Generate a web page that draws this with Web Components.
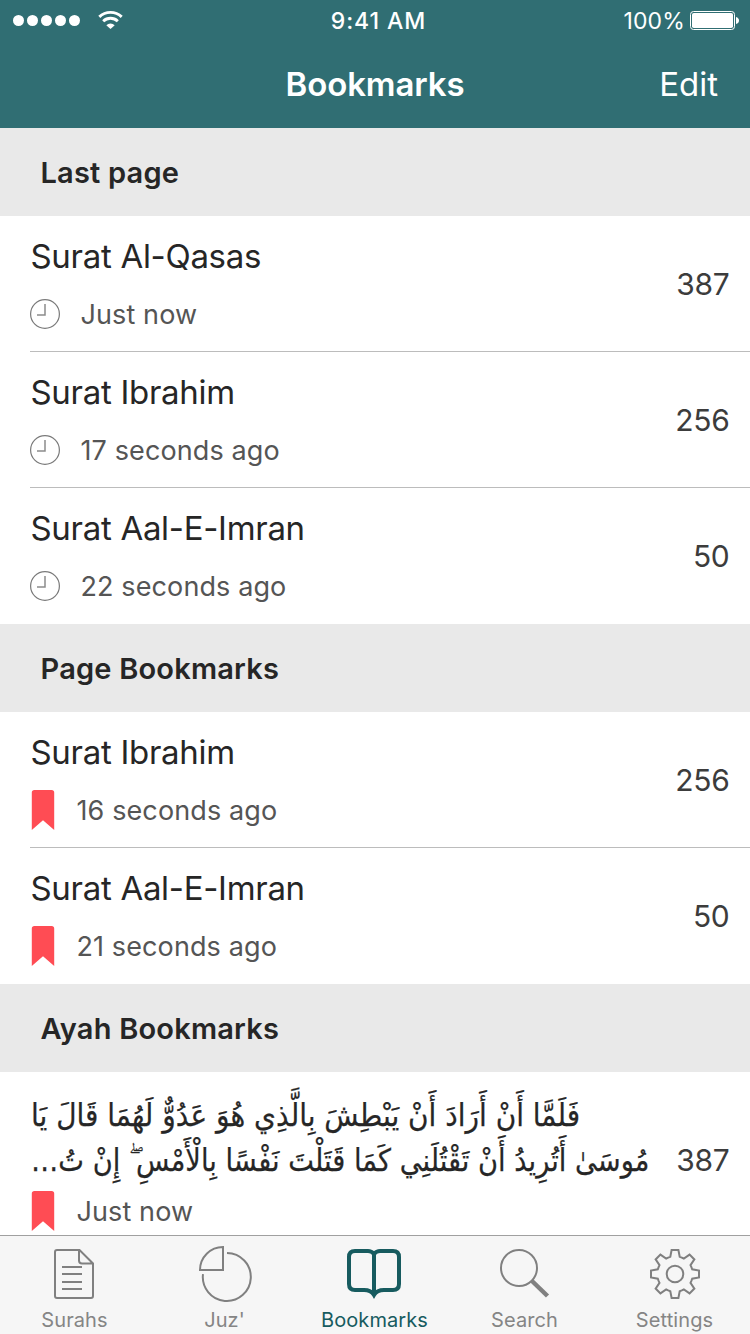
<!DOCTYPE html>
<html lang="en">
<head>
<meta charset="utf-8">
<title>Bookmarks</title>
<style>
html,body{margin:0;height:100%;background:#fff}
body{font-family:Inter,"Liberation Sans",sans-serif;color:#262626}
</style>
</head>
<body>
<quran-app></quran-app>
<script>
const define = (name, html, setup) => customElements.define(name, class extends HTMLElement {
  constructor() {
    super();
    const t = document.createElement('template');
    t.innerHTML = html;
    this.attachShadow({mode: 'open'}).append(t.content.cloneNode(true));
  }
  connectedCallback() { if (setup) setup(this, this.shadowRoot); }
});

define('status-bar', `<style>
:host{display:grid;grid-template-columns:1fr auto 1fr;grid-template-rows:40px;align-items:start;height:40px;padding:0 11px 0 13px;color:#fff;font-size:23px;line-height:42px;box-sizing:border-box}
.left,.right{display:flex;align-items:flex-start;height:40px}
.right{justify-content:flex-end;gap:5px}
.left svg,.right svg{display:block}
.right svg{margin-top:10px}
.time{font-weight:500;letter-spacing:.95px;padding-left:5px}
.pct{letter-spacing:.15px}
</style>
<div class="left"><svg width="112" height="40" viewBox="0 0 112 40" fill="#fff">
<circle cx="5.5" cy="20.5" r="5.5"/><circle cx="19.5" cy="20.5" r="5.5"/><circle cx="33.5" cy="20.5" r="5.5"/><circle cx="47.5" cy="20.5" r="5.5"/><circle cx="61.5" cy="20.5" r="5.5"/>
<g fill="none" stroke="#fff" stroke-width="2.9"><path d="M86.3 16.900a16.2 16.2 0 0 1 22.4 0"/><path d="M90.2 21.2a10.6 10.6 0 0 1 14.6 0"/></g>
<path d="M93.3 25.3a6 6 0 0 1 8.4 0L97.5 29z"/></svg></div>
<div class="time">9:41 AM</div>
<div class="right"><span class="pct">100%</span><svg width="49" height="20" viewBox="0 0 49 20"><rect x=".5" y="1.5" width="44" height="18" rx="3" fill="none" stroke="#fff"/><rect x="2" y="3" width="41" height="15" rx="1.8" fill="#fff"/><path d="M46 7q3 1 3 3.500t-3 3.500z" fill="#fff"/></svg></div>`);

define('nav-bar', `<style>
:host{display:grid;grid-template-columns:1fr auto 1fr;align-items:center;height:88px;padding:0 32px;color:#fff;font-size:33px;line-height:88px}
.title{font-weight:600;letter-spacing:-.12px}
.action{justify-self:end}
</style><span></span><div class="title"><slot></slot></div><div class="action"><slot name="action"></slot></div>`);

define('section-header', `<style>
:host{display:block;height:88px;box-sizing:border-box;padding:1px 0 0 40.500px;background:#e9e9e9;font-size:29px;font-weight:600;letter-spacing:.2px;line-height:88px}
</style><slot></slot>`);

define('clock-icon', `<style>:host{display:block;width:50.500px;height:30px}svg{display:block}</style>
<svg width="30" height="30" viewBox="0 0 30 30" fill="none" stroke="#7a7a7a"><circle cx="15" cy="15" r="14.4" stroke-width="1.2"/><path d="M15 5v11H7" stroke-width="1.500" stroke="#8c8c8c"/></svg>`);

define('ribbon-icon', `<style>:host{display:block;width:46.500px;height:40px}svg{display:block}</style>
<svg width="30" height="40" viewBox="0 0 30 40"><path d="M1.8 40V2.6Q1.8 0 4.4 0H21.6Q24.2 0 24.2 2.6V40L13 30.3z" fill="#ff4c54"/></svg>`);

define('bookmark-row', `<style>
:host{display:flex;align-items:center;height:136px;box-sizing:border-box;margin-left:30px;padding-right:20.500px;border-bottom:1px solid #bcbcbc}
:host([last]){border-bottom-color:transparent}
:host([ayah]){height:176px}
.main{flex:1;align-self:stretch;padding-top:20px;box-sizing:border-box;min-width:0}
.title{font-size:33px;line-height:40px;white-space:nowrap;letter-spacing:-.3px;padding-left:.5px}
.sub{display:flex;align-items:center;height:32px;margin-top:22px;font-size:27px;line-height:32px;letter-spacing:.11px;color:#555}
.txt{padding-top:2px}
.page{font-size:30px;line-height:40px;letter-spacing:-.3px;color:#3c3c3c}
:host([ayah]) .title{height:90px;letter-spacing:0}
:host([ayah]) .sub{margin-top:13px}
</style><div class="main"><div class="title"><slot name="title"></slot></div><div class="sub"><slot name="icon"></slot><div class="txt"><slot></slot></div></div></div><div class="page"></div>`,
(el, root) => root.querySelector('.page').textContent = el.getAttribute('page'));

// One line of verse, condensed horizontally towards its left end.
define('ayah-line', `<style>
:host{display:block;height:45px;width:620px}
div{direction:rtl;width:max-content;font:31px/47px "DejaVu Sans",sans-serif;transform-origin:0 0;transform:scaleX(var(--condense));-webkit-text-stroke:.25px currentColor}
</style><div><slot></slot></div>`);

define('tab-item', `<style>
:host{display:flex;flex-direction:column;align-items:center;width:150px;color:#858585;font-size:20px;line-height:24px}
:host([active]){color:#175b5f}
.icon{height:60px;margin-top:8px}
.label{margin-top:4px;padding-right:1px;letter-spacing:.1px}
::slotted(svg){display:block}
</style><div class="icon"><slot name="icon"></slot></div><div class="label"><slot></slot></div>`);

define('tab-bar', `<style>
:host{display:flex;justify-content:space-between;flex:none;height:99px;box-sizing:border-box;border-top:1px solid #a0a0a0;background:#f6f6f6}
svg{fill:none;stroke:#808080;stroke-width:2}
</style>
<tab-item><svg slot="icon" width="60" height="60" viewBox="45 1244 60 60"><path d="M57 1250H79.500L93 1263.500V1296Q93 1298 91 1298H57Q55 1298 55 1296V1252Q55 1250 57 1250ZM79 1250V1260.500Q79 1263.500 82 1263.500H93M62 1267H82M62 1274H82M62 1282H82M62 1289H82"/></svg>Surahs</tab-item>
<tab-item><svg slot="icon" width="60" height="60" viewBox="195 1244 60 60"><path d="M223 1247V1270H200A23 23 0 0 1 223 1247ZM227 1253A24 24 0 1 1 203 1274"/></svg>Juz'</tab-item>
<tab-item active><svg slot="icon" width="60" height="60" viewBox="345 1244 60 60" style="stroke:#175b5f;stroke-width:4"><path d="M374 1254Q371.500 1251 368 1251H355Q349 1251 349 1257V1284Q349 1290 355 1290H364Q371 1290 374 1295Q377 1290 384 1290H393Q399 1290 399 1284V1257Q399 1251 393 1251H380Q376.500 1251 374 1254V1294"/></svg>Bookmarks</tab-item>
<tab-item><svg slot="icon" width="60" height="60" viewBox="495 1244 60 60"><circle cx="519" cy="1268" r="18"/><path d="M532 1281L547.500 1296" stroke-width="4.500"/></svg>Search</tab-item>
<tab-item><svg slot="icon" width="60" height="60" viewBox="645 1244 60 60"><circle cx="675" cy="1274" r="8.300"/><path id="gear"/></svg>Settings</tab-item>`,
(el, root) => {
  // Eight teeth, one every 45 degrees around the hub.
  const tooth = [[-6.8, -16.4], [-4.7, -17.2], [-3.4, -24], [3.4, -24], [4.7, -17.2], [6.8, -16.4]];
  const points = [];
  for (let i = 0; i < 8; i++) {
    const a = i * Math.PI / 4, c = Math.cos(a), s = Math.sin(a);
    for (const [x, y] of tooth) points.push((675 + x * c - y * s).toFixed(2) + ' ' + (1274 + x * s + y * c).toFixed(2));
  }
  root.querySelector('#gear').setAttribute('d', 'M' + points.join('L') + 'Z');
});

define('quran-app', `<style>
:host{display:flex;flex-direction:column;width:750px;height:1334px;overflow:hidden;background:#fff}
header{flex:none;background:#306e73}
main{flex:1;min-height:0;overflow:hidden}
</style>
<header><status-bar></status-bar><nav-bar>Bookmarks<span slot="action">Edit</span></nav-bar></header>
<main>
<section-header>Last page</section-header>
<bookmark-row page="387"><span slot="title">Surat Al-Qasas</span><clock-icon slot="icon"></clock-icon>Just now</bookmark-row>
<bookmark-row page="256"><span slot="title">Surat Ibrahim</span><clock-icon slot="icon"></clock-icon>17 seconds ago</bookmark-row>
<bookmark-row page="50" last><span slot="title">Surat Aal-E-Imran</span><clock-icon slot="icon"></clock-icon>22 seconds ago</bookmark-row>
<section-header>Page Bookmarks</section-header>
<bookmark-row page="256"><span slot="title">Surat Ibrahim</span><ribbon-icon slot="icon"></ribbon-icon>16 seconds ago</bookmark-row>
<bookmark-row page="50" last><span slot="title">Surat Aal-E-Imran</span><ribbon-icon slot="icon"></ribbon-icon>21 seconds ago</bookmark-row>
<section-header>Ayah Bookmarks</section-header>
<bookmark-row page="387" ayah last><ayah-line slot="title" lang="ar" style="--condense:.902">فَلَمَّا أَنْ أَرَادَ أَنْ يَبْطِشَ بِالَّذِي هُوَ عَدُوٌّ لَهُمَا قَالَ يَا</ayah-line><ayah-line slot="title" lang="ar" style="--condense:.88">مُوسَىٰ أَتُرِيدُ أَنْ تَقْتُلَنِي كَمَا قَتَلْتَ نَفْسًا بِالْأَمْسِ ۖ إِنْ تُ…</ayah-line><ribbon-icon slot="icon"></ribbon-icon>Just now</bookmark-row>
</main>
<tab-bar></tab-bar>`);
</script>
</body>
</html>
